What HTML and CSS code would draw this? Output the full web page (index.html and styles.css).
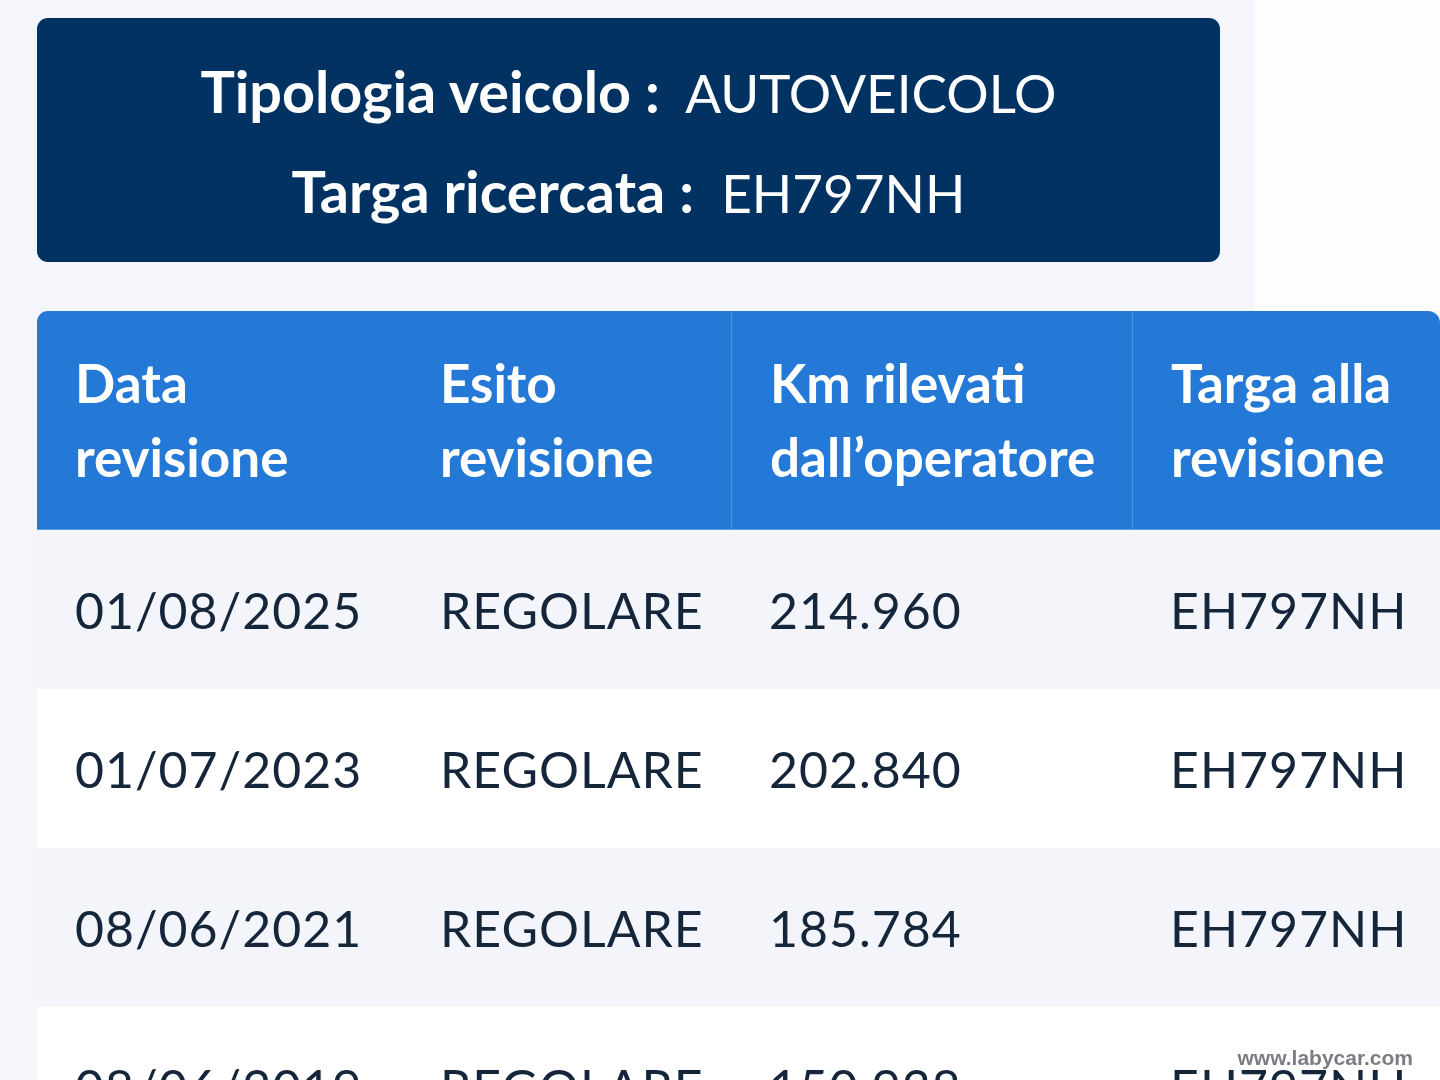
FILE: index.html
```html
<!DOCTYPE html>
<html lang="it">
<head>
<meta charset="utf-8">
<title>Revisioni</title>
<link rel="stylesheet" href="styles.css">
</head>
<body>
<div class="top">
  <div class="info-card">
    <p class="info-line"><span class="label">Tipologia veicolo :</span>&nbsp; AUTOVEICOLO</p>
    <p class="info-line"><span class="label">Targa ricercata :</span>&nbsp; EH797NH</p>
  </div>
</div>
<div class="table-wrap">
  <table class="rev-table">
    <colgroup>
      <col class="c1"><col class="c2"><col class="c3"><col class="c4">
    </colgroup>
    <thead>
      <tr>
        <th>Data<br>revisione</th>
        <th class="nb">Esito<br>revisione</th>
        <th>Km rilevati<br>dall’operatore</th>
        <th>Targa alla<br>revisione</th>
      </tr>
    </thead>
    <tbody>
      <tr class="alt"><td>01/08/2025</td><td>REGOLARE</td><td>214.960</td><td>EH797NH</td></tr>
      <tr><td>01/07/2023</td><td>REGOLARE</td><td>202.840</td><td>EH797NH</td></tr>
      <tr class="alt"><td>08/06/2021</td><td>REGOLARE</td><td>185.784</td><td>EH797NH</td></tr>
      <tr><td>08/06/2019</td><td>REGOLARE</td><td>150.938</td><td>EH797NH</td></tr>
    </tbody>
  </table>
</div>
<div class="watermark">www.labycar.com</div>
</body>
</html>
```
FILE: styles.css
```css
html, body {
  margin: 0;
  padding: 0;
  background: #fdfdfe;
  overflow: hidden;
  height: 1080px;
}
body {
  font-family: Lato, "Open Sans", sans-serif;
  color: #17283d;
}
.top {
  width: 1255px;
  box-sizing: border-box;
  background: #f4f6fb;
  padding: 18px 35px 49px 37px;
}
.info-card {
  height: 244px;
  box-sizing: border-box;
  background: #023262;
  border-radius: 11px;
  color: #ffffff;
  text-align: center;
  display: flex;
  flex-direction: column;
  justify-content: center;
  padding-top: 4px;
}
.info-line {
  margin: 0;
  font-size: 53px;
  line-height: 98px;
  font-weight: 400;
  white-space: nowrap;
}
.label {
  font-weight: 700;
  font-size: 57.5px;
}
.table-wrap {
  background: #f4f6fb;
  padding-left: 37px;
  height: 769px;
}
.rev-table {
  width: 1403px;
  border-collapse: separate;
  border-spacing: 0;
  table-layout: fixed;
}
.c1 { width: 365px; }
.c2 { width: 329px; }
.c3 { width: 401px; }
.c4 { width: 308px; }
.rev-table th {
  background: #2479d7;
  color: #ffffff;
  font-weight: 700;
  font-size: 53px;
  line-height: 74px;
  text-align: left;
  padding: 0 0 0 38px;
  height: 218px;
  border-bottom: 1px solid #5a9ce6;
  border-left: 1px solid #4e92e2;
  white-space: nowrap;
}
.rev-table th:first-child {
  border-left: none;
  border-top-left-radius: 11px;
}
.rev-table th.nb {
  border-left: none;
}
.rev-table th:last-child {
  border-top-right-radius: 12px;
}
.rev-table td {
  font-size: 50px;
  height: 159px;
  padding: 0 0 0 38px;
  white-space: nowrap;
  color: #15263b;
  letter-spacing: 1px;
}
.rev-table tbody tr td {
  background: #ffffff;
}
.rev-table tbody tr.alt td {
  background: #f3f5fb;
}
.watermark {
  position: fixed;
  right: 27px;
  bottom: 10px;
  font-family: "Liberation Sans", Arial, sans-serif;
  font-weight: 700;
  font-size: 21px;
  color: #7b7d82;
}
```
